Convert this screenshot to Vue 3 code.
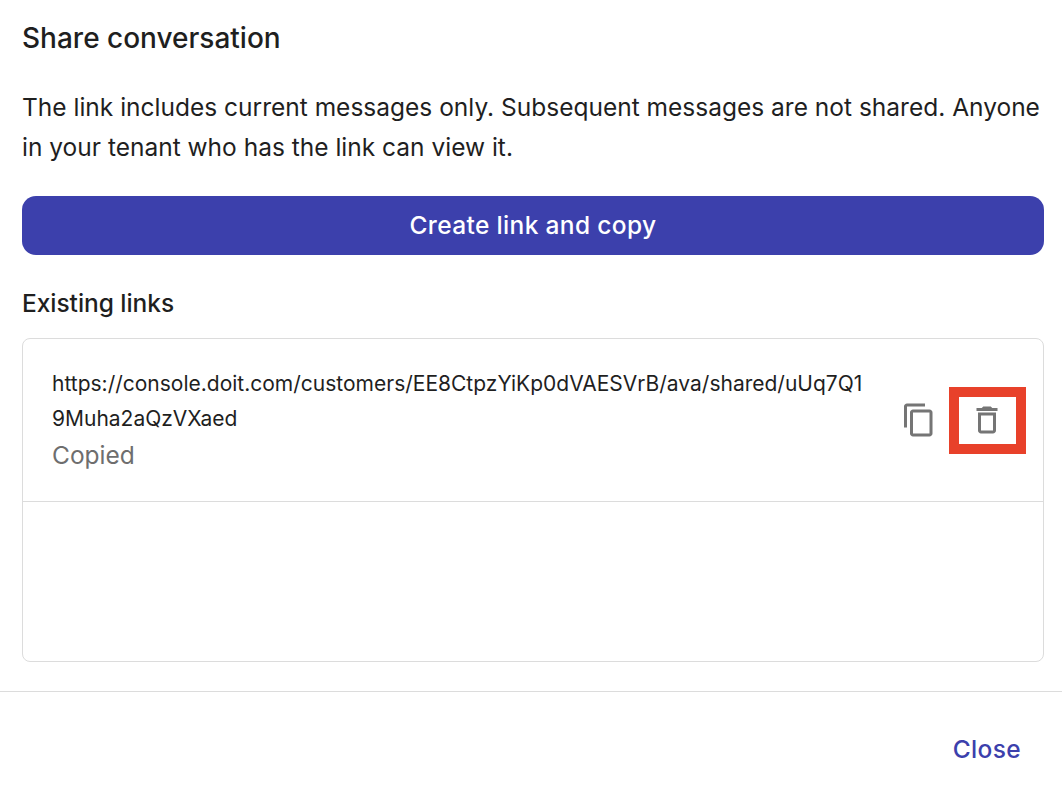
<script setup>
const url = 'https://console.doit.com/customers/EE8CtpzYiKp0dVAESVrB/ava/shared/uUq7Q19Muha2aQzVXaed'
</script>

<template>
  <div class="dialog">
    <div class="body">
      <h2 class="title">Share conversation</h2>
      <p class="desc">The link includes current messages only. Subsequent messages are not shared. Anyone in your tenant who has the link can view it.</p>
      <button class="primary">Create link and copy</button>
      <h3 class="sub">Existing links</h3>
      <div class="list">
        <div class="row">
          <div class="info">
            <div class="url">{{ url }}</div>
            <div class="status">Copied</div>
          </div>
          <div class="actions">
            <span class="icon-btn">
              <svg width="36" height="36" viewBox="0 0 24 24" fill="#757575"><path d="M16 1H4c-1.100 0-2 .9-2 2v14h2V3h12V1zm3 4H8c-1.100 0-2 .9-2 2v14c0 1.100.9 2 2 2h11c1.100 0 2-.9 2-2V7c0-1.100-.9-2-2-2zm0 16H8V7h11v14z"/></svg>
            </span>
            <span class="del-box">
              <svg width="36" height="36" viewBox="0 0 24 24" fill="#757575"><path d="M6 19c0 1.100.9 2 2 2h8c1.100 0 2-.9 2-2V7H6v12zM8 9h8v10H8V9zm7.500-5-1-1h-5l-1 1H5v2h14V4h-3.500z"/></svg>
            </span>
          </div>
        </div>
      </div>
    </div>
    <div class="footer">
      <button class="close">Close</button>
    </div>
  </div>
</template>

<style>
html, body { background: #fff; }
</style>

<style scoped>
.dialog {
  width: 1062px;
  height: 802px;
  display: flex;
  flex-direction: column;
  font-family: Inter, "Liberation Sans", sans-serif;
  color: #1f1f1f;
  overflow: hidden;
}
.body {
  padding: 20px 18px 0 22px;
  display: flex;
  flex-direction: column;
}
.title {
  margin: 0;
  font-size: 28px;
  font-weight: 500;
  line-height: 36px;
}
.desc {
  margin: 31px 0 0;
  font-size: 24.5px;
  line-height: 40px;
  font-weight: 400;
}
.primary {
  margin-top: 29px;
  height: 59px;
  padding: 0 0 2px;
  border: 0;
  border-radius: 14px;
  background: #3c40ac;
  color: #fff;
  font: 500 24.5px Inter, "Liberation Sans", sans-serif;
  letter-spacing: 0.35px;
}
.sub {
  margin: 31px 0 0;
  font-size: 24.5px;
  font-weight: 500;
  line-height: 34px;
  letter-spacing: -0.05px;
}
.list {
  margin-top: 18px;
  height: 322px;
  border: 1px solid #dcdcdc;
  border-radius: 8px;
}
.row {
  height: 162px;
  box-sizing: content-box;
  border-bottom: 1px solid #dcdcdc;
  display: flex;
  align-items: center;
  justify-content: space-between;
  padding: 0 17px 0 29px;
}
.info { width: 816px; padding: 1px 0; }
.url {
  font-size: 21px;
  line-height: 35px;
  word-break: break-all;
}
.status {
  font-size: 24.5px;
  line-height: 38px;
  color: #6e6e6e;
}
.actions { display: flex; align-items: center; gap: 12px; }
.icon-btn { display: flex; }
.del-box {
  width: 77px;
  height: 67px;
  padding-right: 1px;
  box-sizing: border-box;
  border: 10px solid #e8412a;
  display: flex;
  align-items: center;
  justify-content: center;
}
.footer {
  margin-top: 29px;
  border-top: 1px solid #dcdcdc;
  padding: 42px 41px 0 0;
  display: flex;
  justify-content: flex-end;
}
.close {
  background: none;
  border: 0;
  padding: 0;
  color: #3c40ac;
  font: 500 24.5px Inter, "Liberation Sans", sans-serif;
  letter-spacing: 0.35px;
}
</style>
